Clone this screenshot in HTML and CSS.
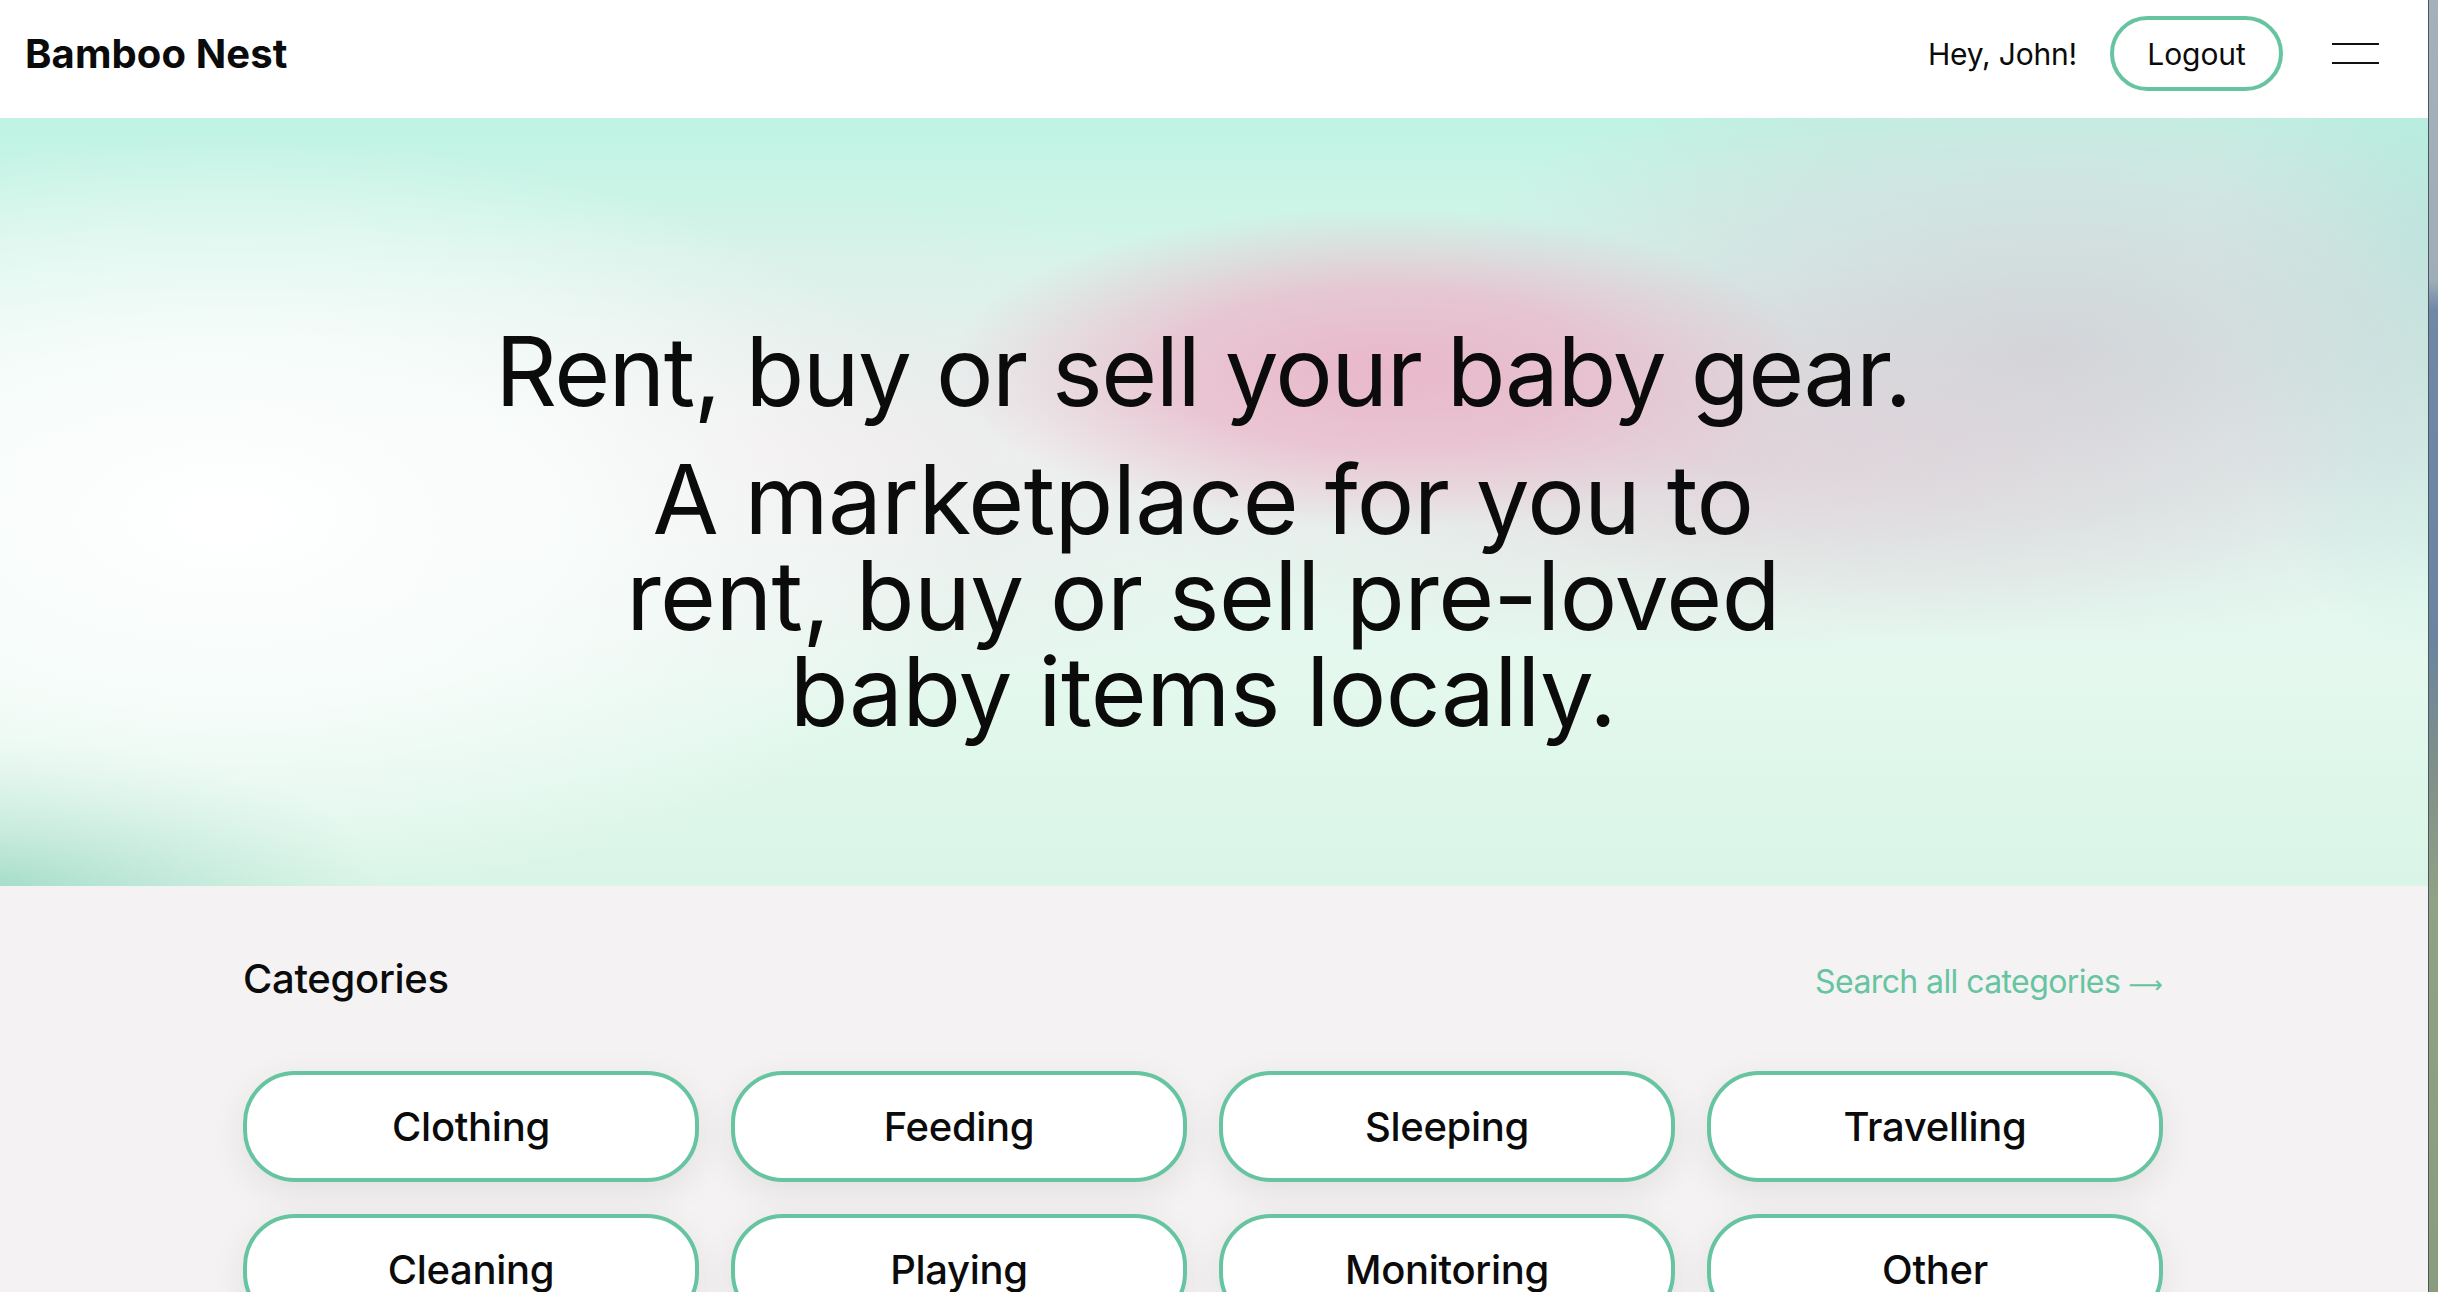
FILE: index.html
```html
<!DOCTYPE html>
<html lang="en">
<head>
<meta charset="utf-8">
<title>Bamboo Nest</title>
<link rel="stylesheet" href="styles.css">
</head>
<body>
<div class="page">
  <header class="topbar">
    <a class="logo" href="#">Bamboo Nest</a>
    <div class="user">
      <span class="greeting">Hey, John!</span>
      <button class="logout">Logout</button>
      <button class="menu" aria-label="Menu"><span></span><span></span></button>
    </div>
  </header>

  <section class="hero">
    <h1 class="hero-title">Rent, buy or sell your baby gear.</h1>
    <h2 class="hero-sub">A marketplace for you to rent, buy or sell pre-loved baby items locally.</h2>
  </section>

  <section class="categories">
    <div class="container">
      <div class="cat-head">
        <h3 class="cat-title">Categories</h3>
        <a class="cat-link" href="#">Search all categories <span class="arrow">⟶</span></a>
      </div>
      <div class="cat-grid">
        <a class="cat-card" href="#">Clothing</a>
        <a class="cat-card" href="#">Feeding</a>
        <a class="cat-card" href="#">Sleeping</a>
        <a class="cat-card" href="#">Travelling</a>
        <a class="cat-card" href="#">Cleaning</a>
        <a class="cat-card" href="#">Playing</a>
        <a class="cat-card" href="#">Monitoring</a>
        <a class="cat-card" href="#">Other</a>
      </div>
    </div>
  </section>
</div>
<div class="desktop"></div>
</body>
</html>
```

FILE: styles.css
```css
* { box-sizing: border-box; }

html, body {
  margin: 0;
  padding: 0;
  height: 1292px;
  overflow: hidden;
}

body {
  display: flex;
  font-family: Inter, "Noto Sans", sans-serif;
  color: #0b0b0b;
  background: #6f86a0;
}

.page {
  width: 2428px;
  flex: none;
  height: 1292px;
  background: #f4f2f3;
  overflow: hidden;
}

.desktop {
  flex: 1;
  border-left: 1px solid #4c5660;
  background: linear-gradient(180deg, #a4b1b8 0px, #9fadb6 280px, #6f88a6 310px, #6b84a0 640px, #7d8f8a 760px, #91a184 900px, #8a9c7e 1292px);
}

/* Header */
.topbar {
  height: 118px;
  background: #fff;
  display: flex;
  align-items: center;
  justify-content: space-between;
  padding: 0 49px 11px 25px;
}

.logo {
  font-size: 40px;
  font-weight: 700;
  color: #0b0b0b;
  text-decoration: none;
  letter-spacing: 0.1px;
}

.user {
  display: flex;
  align-items: center;
}

.greeting {
  font-size: 30px;
  letter-spacing: -0.2px;
  margin-right: 33px;
}

.logout {
  height: 75px;
  width: 173px;
  border: 4px solid #66c4a0;
  border-radius: 38px;
  background: #fff;
  font-family: inherit;
  font-size: 30px;
  color: #0b0b0b;
  letter-spacing: -0.1px;
  padding: 0;
  margin-right: 49px;
}

.menu {
  width: 47px;
  height: 21px;
  border: 0;
  padding: 0;
  background: transparent;
  display: flex;
  flex-direction: column;
  justify-content: space-between;
}

.menu span {
  display: block;
  width: 47px;
  height: 2px;
  background: #111;
}

/* Hero */
.hero {
  height: 768px;
  padding: 205px 22px 0 0;
  text-align: center;
  background:
    radial-gradient(ellipse 760px 380px at 230px 400px, rgba(255,255,255,1) 0%, rgba(250,253,252,0.85) 45%, rgba(255,255,255,0) 100%),
    radial-gradient(ellipse 430px 160px at 1380px 250px, rgba(234,178,199,0.9) 0%, rgba(234,182,201,0.72) 50%, rgba(236,190,205,0) 100%),
    radial-gradient(ellipse 650px 200px at 1700px 340px, rgba(228,190,205,0.5) 0%, rgba(230,198,210,0.2) 60%, rgba(232,200,210,0) 100%),
    radial-gradient(ellipse 600px 260px at 800px 330px, rgba(246,222,232,0.55) 0%, rgba(246,225,232,0) 100%),
    radial-gradient(ellipse 650px 300px at 2050px 230px, rgba(208,212,216,0.95) 0%, rgba(212,216,220,0.55) 55%, rgba(212,216,220,0) 100%),
    radial-gradient(ellipse 380px 150px at 0px 768px, rgba(160,218,198,0.85) 0%, rgba(170,222,204,0) 100%),
    radial-gradient(ellipse 220px 420px at 2428px 120px, rgba(178,236,222,0.95) 0%, rgba(180,236,224,0) 100%),
    linear-gradient(180deg, #bff3e3 0px, #d4f5ea 140px, #e8f7f2 330px, #e4f8ee 560px, #d9f5e7 768px);
}

.hero-title {
  margin: 0 0 32px;
  font-size: 96px;
  line-height: 96px;
  font-weight: 400;
  letter-spacing: -1.5px;
}

.hero-sub {
  margin: 0 auto;
  max-width: 1240px;
  font-size: 96px;
  line-height: 96px;
  font-weight: 400;
  letter-spacing: -0.6px;
}

/* Categories */
.categories {
  padding: 68px 22px 0 0;
}

.container {
  width: 1920px;
  margin: 0 auto;
}

.cat-head {
  display: flex;
  justify-content: space-between;
  align-items: baseline;
  margin-bottom: 68px;
}

.cat-title {
  margin: 0;
  font-size: 40px;
  font-weight: 500;
  letter-spacing: -0.3px;
}

.cat-link {
  font-size: 32px;
  color: #66c4a0;
  text-decoration: none;
  letter-spacing: -0.6px;
}

.cat-link .arrow {
  font-family: "DejaVu Sans", sans-serif;
  font-size: 24px;
  letter-spacing: 0;
}

.cat-grid {
  display: grid;
  grid-template-columns: repeat(4, 1fr);
  gap: 32px;
}

.cat-card {
  height: 111px;
  display: flex;
  align-items: center;
  justify-content: center;
  background: #fff;
  border: 4px solid #66c4a0;
  border-radius: 52px;
  box-shadow: 0 10px 36px rgba(0, 0, 0, 0.08);
  font-size: 40px;
  font-weight: 500;
  color: #0b0b0b;
  text-decoration: none;
  letter-spacing: -0.3px;
}
```
